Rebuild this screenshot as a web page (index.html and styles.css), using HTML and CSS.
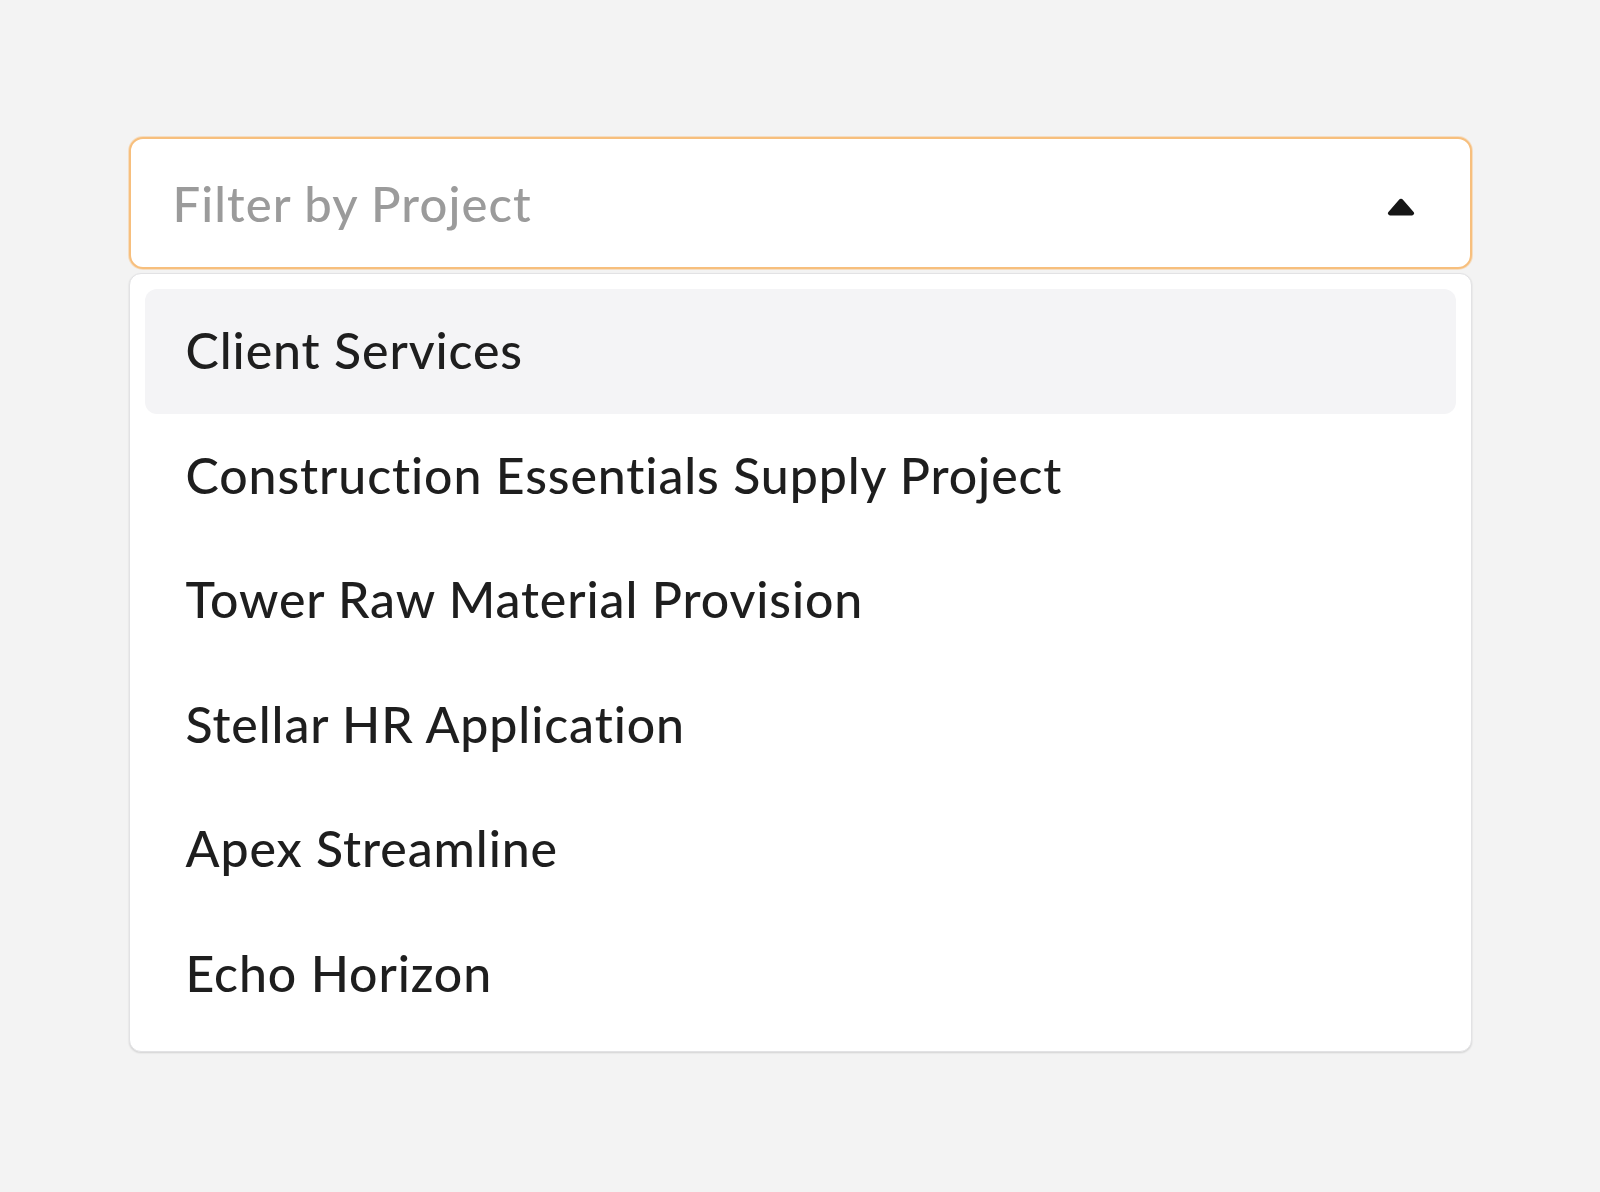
FILE: index.html
```html
<!DOCTYPE html>
<html lang="en">
<head>
<meta charset="utf-8">
<title>Filter by Project</title>
<link rel="stylesheet" href="styles.css">
</head>
<body>
<div class="select">
  <div class="control">
    <span class="placeholder">Filter by Project</span>
    <svg class="caret" width="28" height="18" viewBox="0 0 28 18" aria-hidden="true">
      <path d="M11.6 2.2 Q14 -0.6 16.4 2.2 L26.6 14 Q28.2 16.6 25.2 17.4 L2.8 17.4 Q-0.2 16.6 1.4 14 Z" fill="#161616"/>
    </svg>
  </div>
  <ul class="menu">
    <li class="option active">Client Services</li>
    <li class="option">Construction Essentials Supply Project</li>
    <li class="option">Tower Raw Material Provision</li>
    <li class="option">Stellar HR Application</li>
    <li class="option">Apex Streamline</li>
    <li class="option">Echo Horizon</li>
  </ul>
</div>
</body>
</html>
```
FILE: styles.css
```css
html, body {
  margin: 0;
  padding: 0;
}
body {
  background: #f3f3f3;
  width: 1600px;
  height: 1192px;
  font-family: "Lato", "Noto Sans", sans-serif;
  font-variant-ligatures: none;
}
.select {
  width: 1343px;
  margin: 0 auto;
  padding-top: 137px;
  display: flex;
  flex-direction: column;
  gap: 4px;
}
.control {
  box-sizing: border-box;
  height: 132px;
  border: 2px solid #f7bf7d;
  border-radius: 14px;
  background: #ffffff;
  box-shadow: 0 0 0 1px rgba(248, 196, 134, 0.45);
  display: flex;
  align-items: center;
  justify-content: space-between;
  padding: 0 55px 0 42px;
}
.placeholder {
  font-size: 49px;
  font-weight: 500;
  letter-spacing: 1.1px;
  color: #9b9b9b;
  line-height: 1;
}
.caret {
  display: block;
  margin-top: 8px;
}
.menu {
  list-style: none;
  margin: 0;
  box-sizing: border-box;
  padding: 15px 15px;
  background: #ffffff;
  border: 1px solid #e2e2e4;
  border-radius: 12px;
  box-shadow: 0 1px 2px rgba(0,0,0,0.14);
  display: flex;
  flex-direction: column;
}
.option {
  height: 124.5px;
  display: flex;
  align-items: center;
  padding-left: 41px;
  border-radius: 12px;
  font-size: 50px;
  font-weight: 500;
  letter-spacing: 0.9px;
  color: #1e1e1e;
  padding-bottom: 2px;
  box-sizing: border-box;
}
.option.active {
  background: #f4f4f6;
}
```
